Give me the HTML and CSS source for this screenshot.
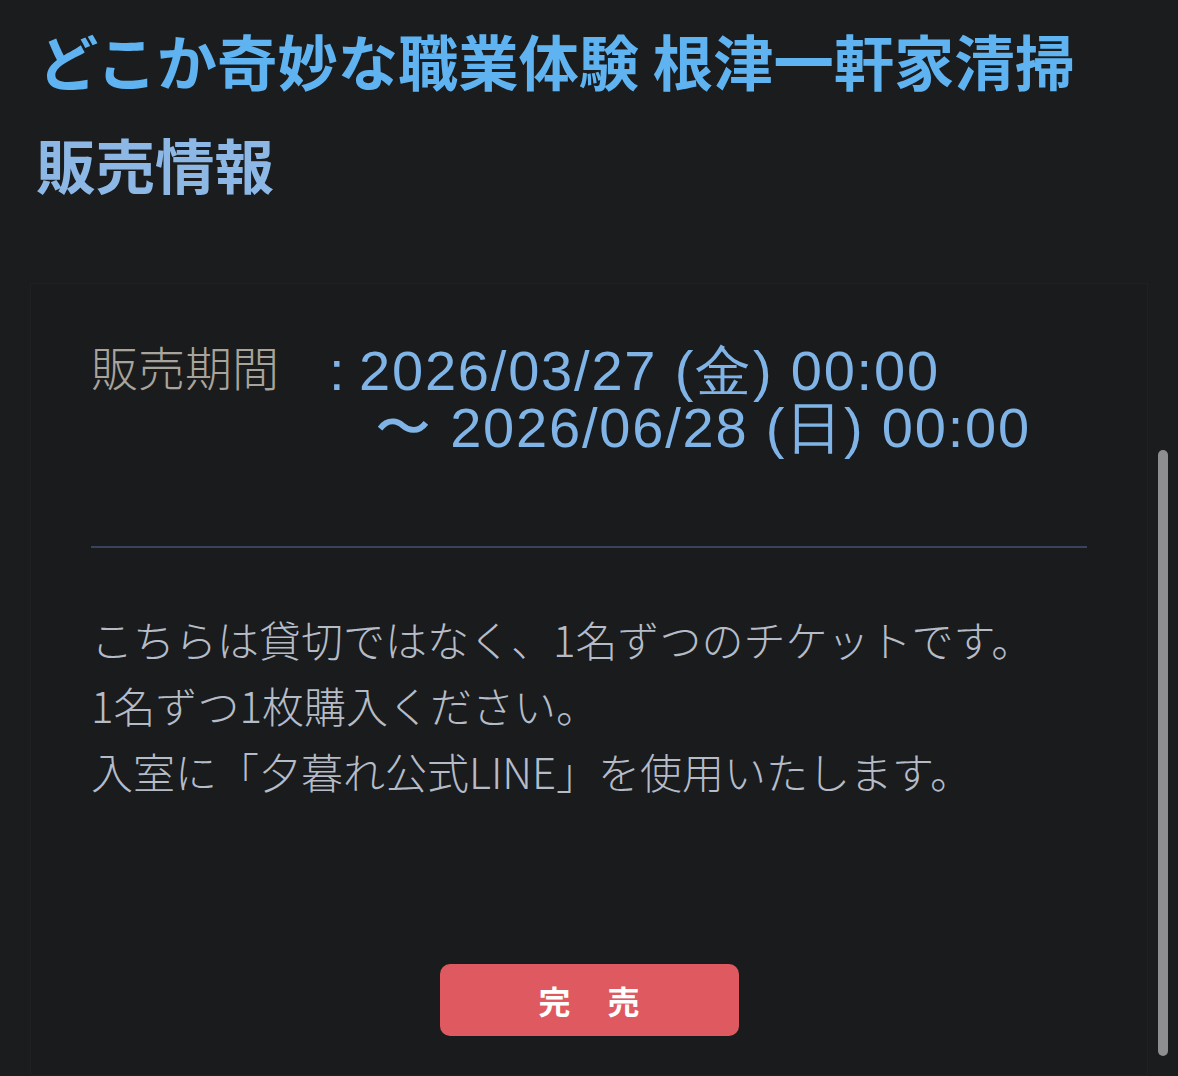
FILE: index.html
```html
<!DOCTYPE html>
<html lang="ja">
<head>
<meta charset="utf-8">
<title>販売情報</title>
<link rel="stylesheet" href="styles.css">
</head>
<body>
<div class="page">
  <h1 class="title">どこか奇妙な職業体験 根津一軒家清掃</h1>
  <h2 class="subtitle">販売情報</h2>
  <section class="card">
    <div class="period">
      <div class="label">販売期間</div>
      <div class="value">
        <div class="line"><span class="colon">:</span>2026/03/27 (金) 00:00</div>
        <div class="line second">〜 2026/06/28 (日) 00:00</div>
      </div>
    </div>
    <hr class="divider">
    <div class="note">
      <p>こちらは貸切ではなく、1名ずつのチケットです。</p>
      <p>1名ずつ1枚購入ください。</p>
      <p>入室に「夕暮れ公式LINE」を使用いたします。</p>
    </div>
    <div class="actions">
      <button class="soldout" type="button">完　売</button>
    </div>
  </section>
</div>
<div class="scrollbar"></div>
</body>
</html>
```

FILE: styles.css
```css
html, body {
  margin: 0;
  padding: 0;
  background: #1b1c1e;
  height: 100%;
  overflow: hidden;
}
body {
  font-family: "Noto Sans CJK JP", "Noto Sans", sans-serif;
}
.page {
  padding: 0 30px;
}
.title {
  margin: 25px 0 0 8px;
  font-size: 60.3px;
  line-height: 70px;
  font-weight: 700;
  color: #5fb3f0;
  white-space: nowrap;
}
.subtitle {
  margin: 33px 0 0 6px;
  font-size: 59.5px;
  line-height: 70px;
  font-weight: 700;
  color: #8db8e6;
}
.card {
  box-sizing: border-box;
  height: 793px;
  margin-top: 85px;
  background: #191b1d;
  border: 1px solid #1e2124;
  padding: 58px 60px 0 60px;
}
.period {
  display: flex;
}
.label {
  width: 238px;
  flex: none;
  font-size: 47px;
  line-height: 48px;
  font-weight: 300;
  color: #a9a49b;
}
.value {
  font-family: "Liberation Sans", Arial, sans-serif;
  font-size: 56px;
  line-height: 57px;
  letter-spacing: 1.8px;
  color: #80b3e6;
}
.colon {
  display: inline-block;
  width: 30px;
}
.line {
  white-space: nowrap;
}
.line.second {
  padding-left: 46px;
}
.divider {
  margin: 90px 0 0 0;
  border: 0;
  height: 2px;
  background: #384360;
}
.note {
  margin-top: 58px;
  color: #b5bcc8;
  font-size: 42px;
  line-height: 66px;
  font-weight: 300;
}
.note p {
  margin: 0;
}
.actions {
  display: flex;
  justify-content: center;
  margin-top: 160px;
}
.soldout {
  width: 299px;
  height: 72px;
  border: 0;
  border-radius: 10px;
  background: #de5a60;
  color: #ffffff;
  font-family: "Noto Sans CJK JP", sans-serif;
  font-size: 32px;
  font-weight: 600;
  letter-spacing: 2.5px;
  text-indent: 2.5px;
}
.scrollbar {
  position: fixed;
  left: 1158px;
  top: 450px;
  width: 10px;
  height: 606px;
  border-radius: 5px;
  background: #8e8e91;
}
```
